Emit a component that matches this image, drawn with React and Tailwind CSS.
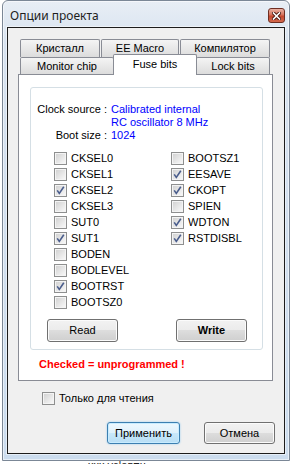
const leftBits = [
  ['CKSEL0', false],
  ['CKSEL1', false],
  ['CKSEL2', true],
  ['CKSEL3', false],
  ['SUT0', false],
  ['SUT1', true],
  ['BODEN', false],
  ['BODLEVEL', false],
  ['BOOTRST', true],
  ['BOOTSZ0', false],
];

const rightBits = [
  ['BOOTSZ1', false],
  ['EESAVE', true],
  ['CKOPT', true],
  ['SPIEN', false],
  ['WDTON', true],
  ['RSTDISBL', true],
];

function Check({ on }) {
  return (
    <span className="relative flex h-[13px] w-[13px] shrink-0 border border-[#8e8f8f] bg-[#f4f4f4] p-px">
      <span className="flex-1 bg-[linear-gradient(135deg,#d3d3d3,#f7f7f7)]" />
      {on && (
        <svg className="absolute -left-px -top-px" width="13" height="13" viewBox="0 0 13 13">
          <path d="M3.2 6.4 L5.3 9.4 L9.8 2.8" fill="none" stroke="#4a5d8c" strokeWidth="1.6" />
        </svg>
      )}
    </span>
  );
}

function CheckRow({ label, on }) {
  return (
    <div className="flex h-[16px] items-center gap-[4px]">
      <Check on={on} />
      <span>{label}</span>
    </div>
  );
}

function Btn({ children, className = '', primary = false }) {
  const skin = primary
    ? 'border-[#3c7fb1] bg-[linear-gradient(to_bottom,#eef8fe_0%,#dff1fc_50%,#c9e8fa_50%,#b8def5_100%)] shadow-[inset_0_0_0_1px_#c8ecff,0_0_2px_#8cc8f0]'
    : 'border-[#707070] bg-[linear-gradient(to_bottom,#f2f2f2_0%,#ebebeb_50%,#dddddd_50%,#cfcfcf_100%)] shadow-[inset_0_0_0_1px_#fbfbfb]';
  return (
    <div className={`flex items-center justify-center rounded-[3px] border text-black ${skin} ${className}`}>
      {children}
    </div>
  );
}

function Tab({ children, className = '' }) {
  return (
    <div
      className={`flex items-center justify-center rounded-t-[2px] border border-b-0 border-[#898c95] bg-[linear-gradient(to_bottom,#f4f4f4,#dcdcdc)] ${className}`}
    >
      {children}
    </div>
  );
}

export default function App() {
  return (
    <div className="h-[464px] w-[294px] overflow-hidden bg-white font-['Liberation_Sans',Arial,sans-serif] text-[11px] leading-[13px] text-black">
      <div className="ml-[2px] flex h-[461px] w-[288px] flex-col rounded-t-[6px] border border-[#7b8796] bg-[linear-gradient(to_bottom,#e8eef5,#d8e3f0_40px,#cbdcee)] px-[4px] pb-[6px] shadow-[inset_0_0_0_1px_rgba(255,255,255,0.55)]">
        {/* title bar */}
        <div className="flex h-[26px] shrink-0 items-start justify-between">
          <span className="mt-[7px] pl-[3px] font-['Noto_Sans',sans-serif] text-[12px] leading-[15px] text-[#1e1e1e]">
            Опции проекта
          </span>
          <div className="mt-[7px] flex h-[15px] w-[17px] items-center justify-center rounded-[3px] border border-[#6e2e22] bg-[linear-gradient(to_bottom,#eab2a4,#d6735c_45%,#c5472e_55%,#d2694d)]">
            <svg width="9" height="8" viewBox="0 0 9 8">
              <path d="M1.5 1 L7.5 7 M7.5 1 L1.5 7" stroke="#4a1810" strokeWidth="3.4" strokeLinecap="square" />
              <path d="M1.5 1 L7.5 7 M7.5 1 L1.5 7" stroke="#ffffff" strokeWidth="1.6" strokeLinecap="square" />
            </svg>
          </div>
        </div>

        {/* client area */}
        <div className="flex h-[427px] flex-col border border-[#1c1c1c] bg-[#f0f0f0] shadow-[0_0_0_1px_rgba(255,255,255,0.5)]">
          <div className="ml-[10px] mt-[11px] w-[255px]">
            <div className="flex h-[18px] pl-[2px]">
              <Tab className="w-[80px]">Кристалл</Tab>
              <Tab className="ml-px w-[78px]">EE Macro</Tab>
              <Tab className="ml-px w-[90px]">Компилятор</Tab>
            </div>
            <div className="flex h-[17px] items-end pl-[2px]">
              <Tab className="h-[17px] w-[94px]">Monitor chip</Tab>
              <div className="relative z-10 -mb-px -ml-px flex h-[21px] w-[84px] items-start justify-center rounded-t-[2px] border border-b-0 border-[#898c95] bg-white pt-[3px]">
                Fuse bits
              </div>
              <Tab className="-ml-px h-[17px] w-[74px]">Lock bits</Tab>
            </div>

            {/* panel */}
            <div className="flex h-[307px] flex-col border border-[#898c95] bg-white">
              <div className="ml-[11px] mt-[12px] w-[233px] rounded-[3px] border border-[#d5dfe5] pb-[7px] pt-[15px]">
                <div className="grid grid-cols-[70px_1fr] gap-x-[4px] pl-[6px]">
                  <span className="text-right">Clock source :</span>
                  <span className="text-[#0000ff]">Calibrated internal</span>
                  <span />
                  <span className="text-[#0000ff]">RC oscillator 8 MHz</span>
                  <span className="text-right">Boot size :</span>
                  <span className="text-[#0000ff]">1024</span>
                </div>
                <div className="mt-[8px] flex pl-[23px]">
                  <div className="flex w-[117px] flex-col">
                    {leftBits.map(([n, v]) => (
                      <CheckRow key={n} label={n} on={v} />
                    ))}
                  </div>
                  <div className="flex flex-col">
                    {rightBits.map(([n, v]) => (
                      <CheckRow key={n} label={n} on={v} />
                    ))}
                  </div>
                </div>
                <div className="mt-[9px] flex gap-[58px] pl-[16px]">
                  <Btn className="h-[23px] w-[71px]">Read</Btn>
                  <Btn className="h-[23px] w-[71px] font-bold">Write</Btn>
                </div>
              </div>
              <div className="ml-[20px] mt-[8px] font-bold text-[#ff0000]">Checked = unprogrammed !</div>
            </div>
          </div>

          <div className="ml-[34px] mt-[11px] flex h-[13px] items-center gap-[4px]">
            <Check on={false} />
            <span>Только для чтения</span>
          </div>

          <div className="ml-[99px] mt-[17px] flex gap-[24px]">
            <Btn primary className="h-[22px] w-[73px]">Применить</Btn>
            <Btn className="h-[22px] w-[71px]">Отмена</Btn>
          </div>
        </div>
      </div>
      <div className="ml-[88px] -mt-[1px] h-[4px] overflow-hidden text-[11px] leading-[11px] text-[#222]">
        ххх.ус|ев=ц
      </div>
    </div>
  );
}
